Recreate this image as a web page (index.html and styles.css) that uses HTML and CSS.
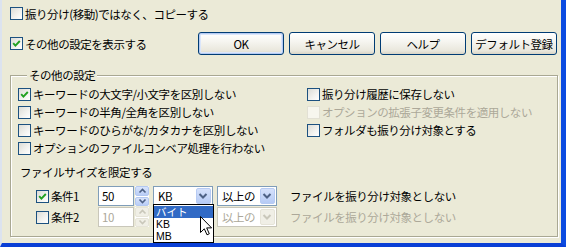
FILE: index.html
```html
<!DOCTYPE html>
<html lang="ja">
<head>
<meta charset="utf-8">
<title>設定</title>
<link rel="stylesheet" href="styles.css">
</head>
<body>
<div class="window">
  <div class="top-row">
    <label class="cb"><span class="box"></span><span class="lbl">振り分け(移動)ではなく、コピーする</span></label>
  </div>
  <div class="action-row">
    <label class="cb"><span class="box"><svg class="tick" viewBox="0 0 11 11"><path d="M2.2 5.2 L4.4 7.6 L8.8 3.0"/></svg></span><span class="lbl">その他の設定を表示する</span></label>
    <div class="buttons">
      <button class="btn default">OK</button>
      <button class="btn">キャンセル</button>
      <button class="btn">ヘルプ</button>
      <button class="btn">デフォルト登録</button>
    </div>
  </div>
  <fieldset class="group">
    <legend>その他の設定</legend>
    <div class="options">
      <label class="cb"><span class="box"><svg class="tick" viewBox="0 0 11 11"><path d="M2.2 5.2 L4.4 7.6 L8.8 3.0"/></svg></span><span class="lbl">キーワードの大文字/小文字を区別しない</span></label>
      <label class="cb"><span class="box"></span><span class="lbl">振り分け履歴に保存しない</span></label>
      <label class="cb"><span class="box"></span><span class="lbl">キーワードの半角/全角を区別しない</span></label>
      <label class="cb disabled"><span class="box"></span><span class="lbl">オプションの拡張子変更条件を適用しない</span></label>
      <label class="cb"><span class="box"></span><span class="lbl">キーワードのひらがな/カタカナを区別しない</span></label>
      <label class="cb"><span class="box"></span><span class="lbl">フォルダも振り分け対象とする</span></label>
      <label class="cb"><span class="box"></span><span class="lbl">オプションのファイルコンベア処理を行わない</span></label>
    </div>
    <div class="size-title">ファイルサイズを限定する</div>
    <div class="cond">
      <label class="cb cond-cb"><span class="box"><svg class="tick" viewBox="0 0 11 11"><path d="M2.2 5.2 L4.4 7.6 L8.8 3.0"/></svg></span><span class="lbl">条件1</span></label>
      <div class="num"><span class="num-val">50</span></div>
      <div class="spin">
        <span class="spin-btn"><svg viewBox="0 0 9 6"><path d="M1.5 4.5 L4.5 1.5 L7.5 4.5"/></svg></span>
        <span class="spin-btn"><svg viewBox="0 0 9 6"><path d="M1.5 1.5 L4.5 4.5 L7.5 1.5"/></svg></span>
      </div>
      <div class="combo unit">
        <span class="combo-val">KB</span>
        <span class="drop"><svg viewBox="0 0 14 16"><path d="M3.5 6 L7 9.5 L10.5 6"/></svg></span>
        <ul class="list">
          <li class="sel">バイト</li>
          <li>KB</li>
          <li>MB</li>
        </ul>
        <svg class="cursor" viewBox="0 0 13 20" width="13" height="20"><path d="M0.5 0.5 L0.5 16.5 L4.3 12.8 L7 18.8 L9.3 17.8 L6.7 11.9 L11.6 11.9 Z"/></svg>
      </div>
      <div class="combo cmp">
        <span class="combo-val">以上の</span>
        <span class="drop"><svg viewBox="0 0 14 16"><path d="M3.5 6 L7 9.5 L10.5 6"/></svg></span>
      </div>
      <span class="cond-text">ファイルを振り分け対象としない</span>
    </div>
    <div class="cond disabled">
      <label class="cb cond-cb"><span class="box"></span><span class="lbl">条件2</span></label>
      <div class="num"><span class="num-val">10</span></div>
      <div class="spin">
        <span class="spin-btn"><svg viewBox="0 0 9 6"><path d="M1.5 4.5 L4.5 1.5 L7.5 4.5"/></svg></span>
        <span class="spin-btn"><svg viewBox="0 0 9 6"><path d="M1.5 1.5 L4.5 4.5 L7.5 1.5"/></svg></span>
      </div>
      <div class="combo unit"></div>
      <div class="combo cmp">
        <span class="combo-val">以上の</span>
        <span class="drop"><svg viewBox="0 0 14 16"><path d="M3.5 6 L7 9.5 L10.5 6"/></svg></span>
      </div>
      <span class="cond-text">ファイルを振り分け対象としない</span>
    </div>
  </fieldset>
</div>
</body>
</html>
```

FILE: styles.css
```css
* { box-sizing: border-box; }

html, body {
  margin: 0;
  padding: 0;
  width: 566px;
  height: 247px;
  overflow: hidden;
  background: #0b45dc;
}

.window {
  width: 566px;
  height: 247px;
  background: #ebead7;
  border-left: 2px solid #dce3ef;
  border-right: 5px solid #0b4be0;
  border-bottom: 4px solid #0a3fd6;
  padding: 7px 4px 0 8px;
  font-family: "Noto Sans CJK JP", "Noto Sans", sans-serif;
  font-size: 11.5px;
  letter-spacing: -0.45px;
  line-height: 16px;
  color: #000;
}

/* checkbox */
.cb {
  display: flex;
  align-items: center;
  gap: 2px;
  white-space: nowrap;
  height: 18px;
}
.box {
  width: 13px;
  height: 13px;
  flex: none;
  border: 1px solid #1c5180;
  background: linear-gradient(135deg, #dcdcd6 0%, #f3f3f0 60%, #ffffff 100%);
  display: flex;
}
.tick {
  width: 11px;
  height: 11px;
}
.tick path {
  fill: none;
  stroke: #21a121;
  stroke-width: 1.9;
}
.cb.disabled .box {
  border-color: #e2e0d4;
  background: #f7f6ee;
}
.cb.disabled .lbl { color: #aca899; }

.top-row {
  height: 13px;
  display: flex;
  align-items: center;
}

.action-row {
  margin-top: 12px;
  height: 23px;
  display: flex;
  align-items: center;
}

.buttons {
  margin-left: auto;
  display: flex;
  gap: 5px;
}
.btn {
  width: 86px;
  height: 23px;
  padding: 0;
  border: 1px solid #003c74;
  border-radius: 3px;
  background: linear-gradient(#ffffff 0%, #f6f5f0 40%, #e9e7dc 85%, #d8d4c6 100%);
  font-family: "Noto Sans CJK JP", "Noto Sans", sans-serif;
  font-size: 11.5px;
  letter-spacing: -0.45px;
  line-height: 16px;
  color: #000;
}
.btn.default {
  box-shadow: inset 0 0 0 1px #b5cbf2, inset 0 0 0 2px #dbe6fa;
}

/* group */
.group {
  margin: 0;
  margin-top: 12px;
  padding: 2px 0 0 7px;
  width: 548px;
  height: 170px;
  border: 1px solid #a9a893;
  box-shadow: inset 1px 1px 0 #ffffff, 1px 1px 0 #ffffff;
  min-inline-size: 0;
}
.group legend {
  margin-left: 9px;
  padding: 0 2px;
  line-height: 16px;
  background: #ebead7;
}

.options {
  display: grid;
  grid-template-columns: 289px 1fr;
  grid-auto-rows: 18px;
}

.size-title {
  margin-top: 7px;
  padding-left: 2px;
  height: 16px;
}

.cond {
  margin-top: 6px;
  height: 20px;
  display: flex;
  align-items: center;
  padding-left: 18px;
}
.cond + .cond { margin-top: 1px; }

.cond-cb { width: 62px; }

.num {
  width: 36px;
  height: 20px;
  border: 1px solid #7f9db9;
  background: #fff;
  padding-left: 3px;
  display: flex;
  align-items: center;
}
.spin {
  margin-left: 1px;
  width: 14px;
  height: 20px;
  display: flex;
  flex-direction: column;
  gap: 1px;
  background: #fff;
}
.spin-btn {
  flex: 1;
  border-radius: 2px;
  background: linear-gradient(#d7e3fb, #b9cdf6);
  border: 1px solid #b3c8f1;
  display: flex;
  align-items: center;
  justify-content: center;
}
.spin-btn svg { width: 9px; height: 6px; }
.spin-btn path { fill: none; stroke: #4d6185; stroke-width: 1.6; }

.combo {
  position: relative;
  height: 20px;
  border: 1px solid #7f9db9;
  background: #fff;
  display: flex;
  align-items: center;
  padding: 1px;
}
.combo.unit { width: 60px; margin-left: 4px; }
.combo.cmp { width: 60px; margin-left: 4px; }
.combo-val {
  flex: 1;
  padding-left: 3px;
}
.drop {
  width: 15px;
  height: 16px;
  border-radius: 2px;
  background: linear-gradient(#d5e1fb, #b6cbf5);
  border: 1px solid #b7cbf3;
  display: flex;
}
.drop svg { width: 14px; height: 16px; margin-left: -1px; margin-top: -1px; }
.drop path { fill: none; stroke: #4d6185; stroke-width: 2; }

.cond-text { margin-left: 13px; }

.cond.disabled .num,
.cond.disabled .combo { border-color: #c9c7ba; }
.cond.disabled .num-val,
.cond.disabled .combo-val,
.cond.disabled .cond-text { color: #aca899; }
.cond.disabled .spin-btn,
.cond.disabled .drop {
  background: #f0efe6;
  border-color: #e6e4d8;
}
.cond.disabled .spin-btn path,
.cond.disabled .drop path { stroke: #c9c7ba; }

/* dropdown list (overlay) */
.list {
  position: absolute;
  left: -1px;
  top: 17px;
  width: 61px;
  margin: 0;
  padding: 1px 0 0 0;
  list-style: none;
  background: #fff;
  border: 1px solid #000;
  z-index: 5;
  font-family: "Liberation Sans", "Noto Sans CJK JP", sans-serif;
  font-size: 10.5px;
  letter-spacing: 0;
}
.list li {
  height: 12px;
  line-height: 12px;
  padding-left: 2px;
}
.list li.sel {
  background: #316ac5;
  color: #fff;
}

.cursor {
  position: absolute;
  left: 46px;
  top: 29px;
  z-index: 6;
}
.cursor path {
  fill: #fff;
  stroke: #000;
  stroke-width: 1;
  stroke-linejoin: miter;
}
```
